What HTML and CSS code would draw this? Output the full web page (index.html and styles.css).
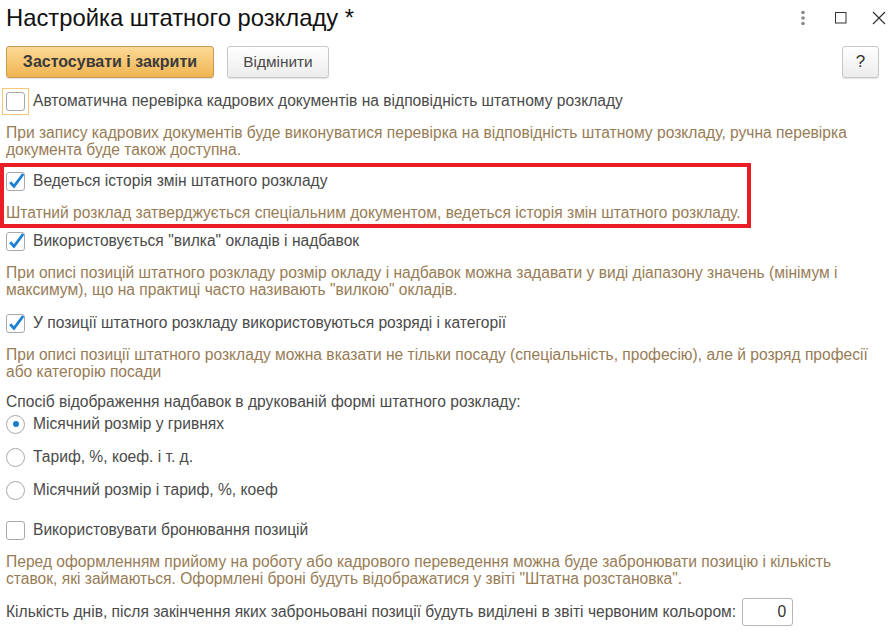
FILE: index.html
```html
<!DOCTYPE html>
<html lang="uk">
<head>
<meta charset="utf-8">
<title>Настройка штатного розкладу</title>
<link rel="stylesheet" href="styles.css">
</head>
<body>
<div class="window">
  <header class="titlebar">
    <h1 class="title">Настройка штатного розкладу *</h1>
    <div class="win-tools">
      <span class="tool">
        <svg width="8" height="16" viewBox="0 0 8 16"><circle cx="4" cy="2.5" r="1.8" fill="#8a8a8a"/><circle cx="4" cy="8" r="1.8" fill="#8a8a8a"/><circle cx="4" cy="13.5" r="1.8" fill="#8a8a8a"/></svg>
      </span>
      <span class="tool">
        <svg width="12" height="12" viewBox="0 0 12 12"><rect x="0.5" y="0.5" width="10.5" height="10.5" fill="none" stroke="#333" stroke-width="1"/></svg>
      </span>
      <span class="tool">
        <svg width="14" height="14" viewBox="0 0 14 14"><path d="M1 1L13 13M13 1L1 13" stroke="#333" stroke-width="1.2" fill="none"/></svg>
      </span>
    </div>
  </header>

  <div class="toolbar">
    <button class="btn btn-primary">Застосувати і закрити</button>
    <button class="btn btn-cancel">Відмінити</button>
    <span class="spacer"></span>
    <button class="btn btn-help">?</button>
  </div>

  <div class="content">
    <label class="row check-row">
      <span class="focus-ring"><span class="checkbox"></span></span>
      <span class="label">Автоматична перевірка кадрових документів на відповідність штатному розкладу</span>
    </label>
    <p class="desc">При запису кадрових документів буде виконуватися перевірка на відповідність штатному розкладу, ручна перевірка документа буде також доступна.</p>

    <div class="highlight">
      <label class="row check-row">
        <span class="checkbox"><svg class="tick" width="17" height="17" viewBox="0 0 17 17"><path d="M3.2 9.2L7 13.4L16.2 1" stroke="#1b80d4" stroke-width="2.8" fill="none" stroke-linecap="butt" stroke-linejoin="miter"/></svg></span>
        <span class="label">Ведеться історія змін штатного розкладу</span>
      </label>
      <p class="desc desc-in">Штатний розклад затверджується спеціальним документом, ведеться історія змін штатного розкладу.</p>
    </div>

    <label class="row check-row">
      <span class="checkbox"><svg class="tick" width="17" height="17" viewBox="0 0 17 17"><path d="M3.2 9.2L7 13.4L16.2 1" stroke="#1b80d4" stroke-width="2.8" fill="none" stroke-linecap="butt" stroke-linejoin="miter"/></svg></span>
      <span class="label">Використовується "вилка" окладів і надбавок</span>
    </label>
    <p class="desc">При описі позицій штатного розкладу розмір окладу і надбавок можна задавати у виді діапазону значень (мінімум і максимум), що на практиці часто називають "вилкою" окладів.</p>

    <label class="row check-row">
      <span class="checkbox"><svg class="tick" width="17" height="17" viewBox="0 0 17 17"><path d="M3.2 9.2L7 13.4L16.2 1" stroke="#1b80d4" stroke-width="2.8" fill="none" stroke-linecap="butt" stroke-linejoin="miter"/></svg></span>
      <span class="label">У позиції штатного розкладу використовуються розряді і категорії</span>
    </label>
    <p class="desc">При описі позиції штатного розкладу можна вказати не тільки посаду (спеціальність, професію), але й розряд професії або категорію посади</p>

    <div class="group-title">Спосіб відображення надбавок в друкованій формі штатного розкладу:</div>
    <label class="row radio-row first-radio">
      <span class="radio selected"></span>
      <span class="label">Місячний розмір у гривнях</span>
    </label>
    <label class="row radio-row">
      <span class="radio"></span>
      <span class="label">Тариф, %, коеф. і т. д.</span>
    </label>
    <label class="row radio-row">
      <span class="radio"></span>
      <span class="label">Місячний розмір і тариф, %, коеф</span>
    </label>

    <label class="row check-row after-radios">
      <span class="checkbox"></span>
      <span class="label">Використовувати бронювання позицій</span>
    </label>
    <p class="desc desc-last">Перед оформленням прийому на роботу або кадрового переведення можна буде забронювати позицію і кількість ставок, які займаються. Оформлені броні будуть відображатися у звіті "Штатна розстановка".</p>

    <div class="row field-row">
      <span class="label">Кількість днів, після закінчення яких заброньовані позиції будуть виділені в звіті червоним кольором:</span>
      <span class="input">0</span>
    </div>
  </div>
</div>
</body>
</html>
```

FILE: styles.css
```css
* { box-sizing: border-box; }
html, body { margin: 0; padding: 0; background: #fff; }
body {
  font-family: "Liberation Sans", Arial, sans-serif;
  color: #4a4a4a;
  font-size: 15.6px;
}
.window { width: 894px; height: 634px; overflow: hidden; padding: 0 6px; }

.titlebar {
  display: flex;
  align-items: center;
  height: 36px;
}
.title {
  margin: 0;
  font-weight: normal;
  font-size: 23.8px;
  color: #111;
  flex: 1;
  padding-bottom: 1px;
}
.win-tools { display: flex; align-items: center; margin-right: -10px; }
.tool { display: flex; align-items: center; justify-content: center; width: 38px; }

.toolbar {
  display: flex;
  align-items: center;
  height: 32px;
  margin-top: 10px;
}
.spacer { flex: 1; }
.btn {
  font-family: "Liberation Sans", Arial, sans-serif;
  font-size: 15px;
  height: 32px;
  padding: 0;
  border: 1px solid #c8c8c8;
  border-radius: 3px;
  background: linear-gradient(#ffffff, #ececec);
  color: #4a4a4a;
  box-shadow: 0 1px 1px rgba(0,0,0,0.12);
  margin-right: 13px;
}
.btn-primary {
  width: 208px;
  font-size: 16px;
  font-weight: bold;
  color: #3a3a3a;
  border-color: #c99a52;
  background: linear-gradient(#fcd996, #f0b552);
}
.btn-cancel { width: 102px; font-size: 15.4px; }
.btn-help {
  width: 37px;
  margin-right: 9px;
  font-size: 17px;
  color: #333;
}

.content { padding-top: 11px; }
.row { display: flex; align-items: center; height: 24px; }
.label { white-space: nowrap; }
.check-row .label, .radio-row .label { margin-left: 8px; }

.checkbox {
  width: 19px;
  height: 19px;
  border: 1px solid #a9a9a9;
  border-radius: 3px;
  background: #fff;
  display: flex;
  align-items: flex-start;
  justify-content: flex-start;
  flex: none;
}
.tick { display: block; overflow: visible; }
.focus-ring {
  display: flex;
  align-items: center;
  justify-content: center;
  width: 27px;
  height: 27px;
  border: 1px solid #f5c878;
  margin: 0 -4px;
  flex: none;
}
.desc {
  margin: 11px 15px 13px 0;
  line-height: 17px;
  color: #977c55;
}
.desc-last { margin-bottom: 11px; }

.highlight {
  width: 751px;
  margin: -8px 0 1px -6px;
  border: 4px solid #ec1c24;
  padding: 2px 0 3px 2px;
}
.highlight .desc-in { margin: 11px 0 0; }

.group-title { line-height: 17px; margin-top: 13px; }
.radio-row { height: 24px; margin-top: 9px; }
.first-radio { margin-top: 2px; }
.radio {
  width: 19px;
  height: 19px;
  border: 1px solid #a9a9a9;
  border-radius: 50%;
  flex: none;
  display: flex;
  align-items: center;
  justify-content: center;
}
.radio.selected::after {
  content: "";
  width: 6px;
  height: 6px;
  border-radius: 50%;
  background: #1c7bd1;
}
.after-radios { margin-top: 16px; }

.field-row { height: 28px; margin-top: 0; }
.input {
  margin-left: 6px;
  width: 51px;
  height: 28px;
  border: 1px solid #b5b5b5;
  border-radius: 3px;
  text-align: right;
  padding: 0 6px;
  line-height: 26px;
  color: #333;
}
```
